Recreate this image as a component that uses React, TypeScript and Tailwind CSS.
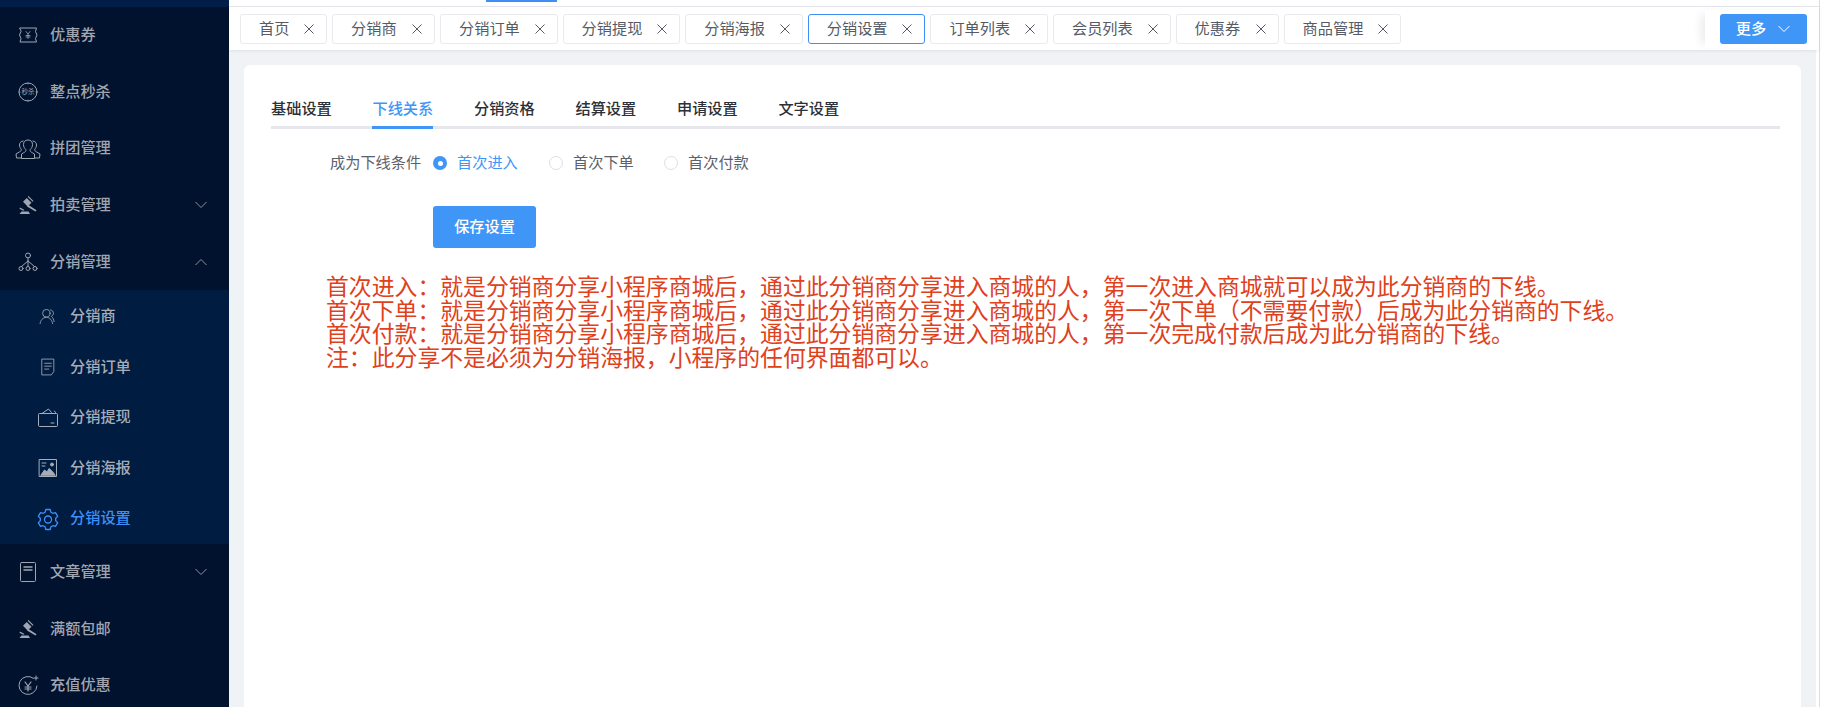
import { ReactNode } from "react";

const FONT = "font-['Inter','Noto_Sans_CJK_SC',sans-serif]";

function Chevron({ up, className }: { up?: boolean; className?: string }) {
  return (
    <svg width="14" height="8" viewBox="0 0 14 8" fill="none" stroke="currentColor" strokeWidth="1" className={className}>
      <path d={up ? "M1.500 7 7 1.500 12.500 7" : "M1.500 1 7 6.500 12.500 1"} />
    </svg>
  );
}

function Icon({ children, size = 24 }: { children: ReactNode; size?: number }) {
  return (
    <svg width={size} height={size} viewBox="0 0 24 24" fill="none" stroke="currentColor" strokeWidth="1" strokeLinecap="round" strokeLinejoin="round">
      {children}
    </svg>
  );
}

const TicketIcon = () => (
  <Icon>
    <path d="M4 5h16.500l-1 3.500 1.500 3.500-1.500 3.500 1 3.500H4l1-3.500L3.500 12 5 8.500z" />
    <path d="M10 8.500l2 2.500 2-2.500M12 11v4.500M10 12.500h4M10 14h4" strokeWidth="0.8" />
  </Icon>
);
const SeckillIcon = () => (
  <Icon>
    <circle cx="12" cy="12" r="9" />
    <path d="M12 3v1M12 20v1M3 12h1M20 12h1" strokeWidth="0.8" />
    <text x="12" y="14.300" textAnchor="middle" fontSize="6.500" stroke="none" fill="currentColor">秒杀</text>
  </Icon>
);
const GroupIcon = () => (
  <svg width="26" height="22" viewBox="0 0 26 22" fill="none" stroke="currentColor" strokeWidth="1">
    <path d="M13 2c-3 0-4.500 2-4.500 4.500 0 2.500 1 3.800 2.300 5 .5 1.500-.5 2.500-2.300 3.300L6.500 16v4.500h13V16l-2-1.200c-1.800-.8-2.800-1.800-2.300-3.300 1.300-1.200 2.300-2.500 2.300-5C17.500 4 16 2 13 2z" />
    <path d="M8.500 3C6 3 4.500 4.800 4.500 7c0 2 .8 3.200 1.800 4.200.3 1.300-.5 2-2 2.800L1 16l.5 4h5" />
    <path d="M17.500 3C20 3 21.500 4.800 21.500 7c0 2-.8 3.200-1.800 4.200-.3 1.300.5 2 2 2.800L25 16l-.5 4h-5" />
  </svg>
);
const GavelIcon = () => (
  <svg width="20" height="20" viewBox="0 0 20 20" fill="currentColor">
    <path d="M10.500 1 15.500 6 14.700 6.800 9.700 1.800z" />
    <path d="M8.800 3 13.500 7.700 9.700 11.500 5 6.800z" />
    <path d="M9 11.500l1.500-1.500 8 5.200-1 1.300z" />
    <path d="M1.500 19 3.500 16.500h7L12 19zM2 12.500l4.500 2.500-1.300.8-3.700-2z" />
  </svg>
);
const NetworkIcon = () => (
  <Icon>
    <circle cx="12" cy="5.500" r="2.500" />
    <circle cx="5" cy="18.500" r="2" />
    <circle cx="12" cy="18.500" r="2" />
    <circle cx="19" cy="18.500" r="2" />
    <path d="M12 8v8.500M12 11 5.500 16.500M12 11l6.500 5.500" />
  </Icon>
);
const UserIcon = () => (
  <Icon size={20}>
    <circle cx="10" cy="7.500" r="4.500" />
    <path d="M2.500 20c.5-4 3-7.500 7.500-7.500s7 3.500 7.500 7.500" />
    <path d="M15 3.500c2.200.3 3.500 2 3.500 4 0 1.700-1 3-2.500 3.700 1.800 1.500 3 3.800 3.300 6.300" />
  </Icon>
);
const DocIcon = () => (
  <Icon size={20}>
    <path d="M5 2.500h14v15l-3 4H5z" />
    <path d="M8 7.500h8M8 11h8M8 14.500h5" />
  </Icon>
);
const WalletIcon = () => (
  <Icon>
    <path d="M2.500 9.500V8.500a1 1 0 0 1 1-1h17a1 1 0 0 1 1 1v11a1 1 0 0 1-1 1h-17a1 1 0 0 1-1-1z" />
    <path d="M6 7.500 12.500 3l3 3.500M18.500 5l1 1.500" />
    <path d="M15 17h3" />
  </Icon>
);
const PosterIcon = () => (
  <Icon>
    <rect x="3.500" y="3.500" width="17" height="17" />
    <path d="M6 7h4M6 10h3" />
    <circle cx="16" cy="8.500" r="1.500" fill="currentColor" />
    <path d="M5 19l3.500-5 2.500 2 2-3.500 2.500 2 1 1 2.500 3.500z" fill="currentColor" />
  </Icon>
);
const GearIcon = () => (
  <Icon>
    <path strokeWidth="1.300" d="M9.800 2.500h4.400l.7 2.700 1.900 1.100 2.700-.7 2.200 3.800-2 1.900v2.400l2 1.900-2.200 3.800-2.700-.7-1.900 1.100-.7 2.700H9.800l-.7-2.700-1.900-1.100-2.700.7L2.300 15.600l2-1.900v-2.400l-2-1.900 2.200-3.800 2.700.7 1.900-1.100z" />
    <circle cx="12" cy="12.500" r="3.500" strokeWidth="1.300" />
  </Icon>
);
const ArticleIcon = () => (
  <Icon>
    <rect x="4.500" y="2.500" width="15" height="19" rx="1" />
    <path d="M8 7h8M8 10h8" strokeWidth="1.500" />
  </Icon>
);
const YuanIcon = () => (
  <Icon>
    <path d="M17.500 4.300A9 9 0 1 0 21 12" />
    <path d="M9 8l3 4 3-4M12 12v5M9 13h6M9 15h6" strokeWidth="1.200" />
    <path d="M20 2v4M18 4h4" />
  </Icon>
);

function MenuRow({ icon, label, arrow }: { icon: ReactNode; label: string; arrow?: "up" | "down" }) {
  return (
    <div className="flex h-[56.700px] shrink-0 items-center text-[15.200px] text-[#a0a6b1]">
      <span className="ml-[14px] mr-[8px] flex w-[28px] shrink-0 justify-center">{icon}</span>
      <span className="font-medium">{label}</span>
      {arrow && <Chevron up={arrow === "up"} className="ml-auto mr-[21px] text-[#8c93a1]" />}
    </div>
  );
}

function SubRow({ icon, label, active }: { icon: ReactNode; label: string; active?: boolean }) {
  return (
    <div className={`flex h-[50.500px] items-center text-[15.200px] ${active ? "text-[#3f8ff7]" : "text-[#a7adb8]"}`}>
      <span className="ml-[35px] flex w-[26px] justify-center">{icon}</span>
      <span className="ml-[9px] font-medium">{label}</span>
    </div>
  );
}

const tabs = [
  { name: "首页", w: "w-[87px]" },
  { name: "分销商", w: "w-[103px]" },
  { name: "分销订单", w: "w-[117.600px]" },
  { name: "分销提现", w: "w-[117.600px]" },
  { name: "分销海报", w: "w-[117.600px]" },
  { name: "分销设置", w: "w-[117.600px]", active: true },
  { name: "订单列表", w: "w-[117.600px]" },
  { name: "会员列表", w: "w-[117.600px]" },
  { name: "优惠券", w: "w-[103px]" },
  { name: "商品管理", w: "w-[117.600px]" },
];

const settingTabs = ["基础设置", "下线关系", "分销资格", "结算设置", "申请设置", "文字设置"];

const notes = [
  "首次进入：就是分销商分享小程序商城后，通过此分销商分享进入商城的人，第一次进入商城就可以成为此分销商的下线。",
  "首次下单：就是分销商分享小程序商城后，通过此分销商分享进入商城的人，第一次下单（不需要付款）后成为此分销商的下线。",
  "首次付款：就是分销商分享小程序商城后，通过此分销商分享进入商城的人，第一次完成付款后成为此分销商的下线。",
  "注：此分享不是必须为分销海报，小程序的任何界面都可以。",
];

export default function App() {
  return (
    <div className={`flex h-[707px] w-[1826px] overflow-hidden bg-white ${FONT}`}>
      <aside className="flex w-[229px] shrink-0 flex-col overflow-hidden bg-[#00122d]">
        <div className="h-[7px] shrink-0 bg-[#001e47]" />
        <MenuRow icon={<TicketIcon />} label="优惠券" />
        <MenuRow icon={<SeckillIcon />} label="整点秒杀" />
        <MenuRow icon={<GroupIcon />} label="拼团管理" />
        <MenuRow icon={<GavelIcon />} label="拍卖管理" arrow="down" />
        <MenuRow icon={<NetworkIcon />} label="分销管理" arrow="up" />
        <div className="shrink-0 bg-[#001c40] pt-[1px]">
          <SubRow icon={<UserIcon />} label="分销商" />
          <SubRow icon={<DocIcon />} label="分销订单" />
          <SubRow icon={<WalletIcon />} label="分销提现" />
          <SubRow icon={<PosterIcon />} label="分销海报" />
          <SubRow icon={<GearIcon />} label="分销设置" active />
        </div>
        <MenuRow icon={<ArticleIcon />} label="文章管理" arrow="down" />
        <MenuRow icon={<GavelIcon />} label="满额包邮" />
        <MenuRow icon={<YuanIcon />} label="充值优惠" />
      </aside>

      <div className="flex w-[1590px] shrink-0 flex-col">
        <div className="h-[7px] shrink-0 border-b border-[#e6e8ee] bg-white pl-[257px]">
          <div className="h-[2px] w-[71px] bg-[#3f8ff7]" />
        </div>
        <div className="relative z-10 flex h-[43px] shrink-0 gap-[5px] bg-white pl-[11px] pt-[7px] shadow-[0_1px_3px_rgba(0,0,0,0.08)]">
          {tabs.map((tab) => (
            <div
              key={tab.name}
              className={`flex h-[30px] shrink-0 items-center justify-between rounded-[3px] border pl-[18px] pr-[11px] text-[15.200px] text-[#555b66] ${tab.w} ${
                tab.active ? "border-[#3f8ff7]" : "border-[#e8eaee]"
              }`}
            >
              <span>{tab.name}</span>
              <svg width="12" height="12" viewBox="0 0 12 12" stroke="currentColor" strokeWidth="1">
                <path d="M1.500 1.500l9 9M10.500 1.500l-9 9" />
              </svg>
            </div>
          ))}
          <div className="absolute right-0 top-[3px] flex h-[38px] w-[114px] items-start justify-end bg-white pr-[12px] pt-[4px] shadow-[-8px_0_10px_-4px_rgba(0,0,0,0.08)]">
            <button className="flex h-[30px] w-[87px] items-center justify-center gap-[11px] rounded-[3px] bg-[#4096f7] text-[15.200px] font-medium text-white">
              更多
              <Chevron />
            </button>
          </div>
        </div>

        <div className="mr-[3px] flex min-h-0 flex-1 bg-[#eff3f5] px-[15px] pt-[15px]">
          <main className="flex-1 rounded-t-[6px] bg-white pl-[27px] pr-[21px] pt-[29px]">
            <div className="flex h-[35px] gap-[40.700px] border-b-[3px] border-[#e5e7ec]">
              {settingTabs.map((name, i) => (
                <div
                  key={name}
                  className={`h-[35px] w-[60.800px] shrink-0 whitespace-nowrap text-[15.200px] font-medium leading-[30px] ${
                    i === 1 ? "border-b-[3px] border-[#4096f7] text-[#4096f7]" : "text-[#2c3038]"
                  }`}
                >
                  {name}
                </div>
              ))}
            </div>

            <div className="mt-[20px] flex h-[28px] items-center text-[15.200px] text-[#5c616b]">
              <span className="ml-[59px] w-[103px] shrink-0">成为下线条件</span>
              <span className="flex h-[14px] w-[14px] items-center justify-center rounded-full bg-[#4096f7]">
                <span className="h-[5px] w-[5px] rounded-full bg-white" />
              </span>
              <span className="ml-[10px] w-[92px] text-[#4096f7]">首次进入</span>
              <span className="h-[14px] w-[14px] rounded-full border border-[#dcdfe6]" />
              <span className="ml-[10px] w-[91px]">首次下单</span>
              <span className="h-[14px] w-[14px] rounded-full border border-[#dcdfe6]" />
              <span className="ml-[10px]">首次付款</span>
            </div>

            <button className="ml-[162px] mt-[29px] block h-[42px] w-[103px] rounded-[3px] bg-[#4096f7] text-[15.200px] font-medium text-white">
              保存设置
            </button>

            <div className="ml-[55px] mt-[28px] whitespace-nowrap text-[22.850px] leading-[23.700px] text-[#e0401c]">
              {notes.map((line) => (
                <p key={line}>{line}</p>
              ))}
            </div>
          </main>
        </div>
      </div>

      <div className="w-[7px] shrink-0 border-l border-[#dddddd] bg-white" />
    </div>
  );
}
